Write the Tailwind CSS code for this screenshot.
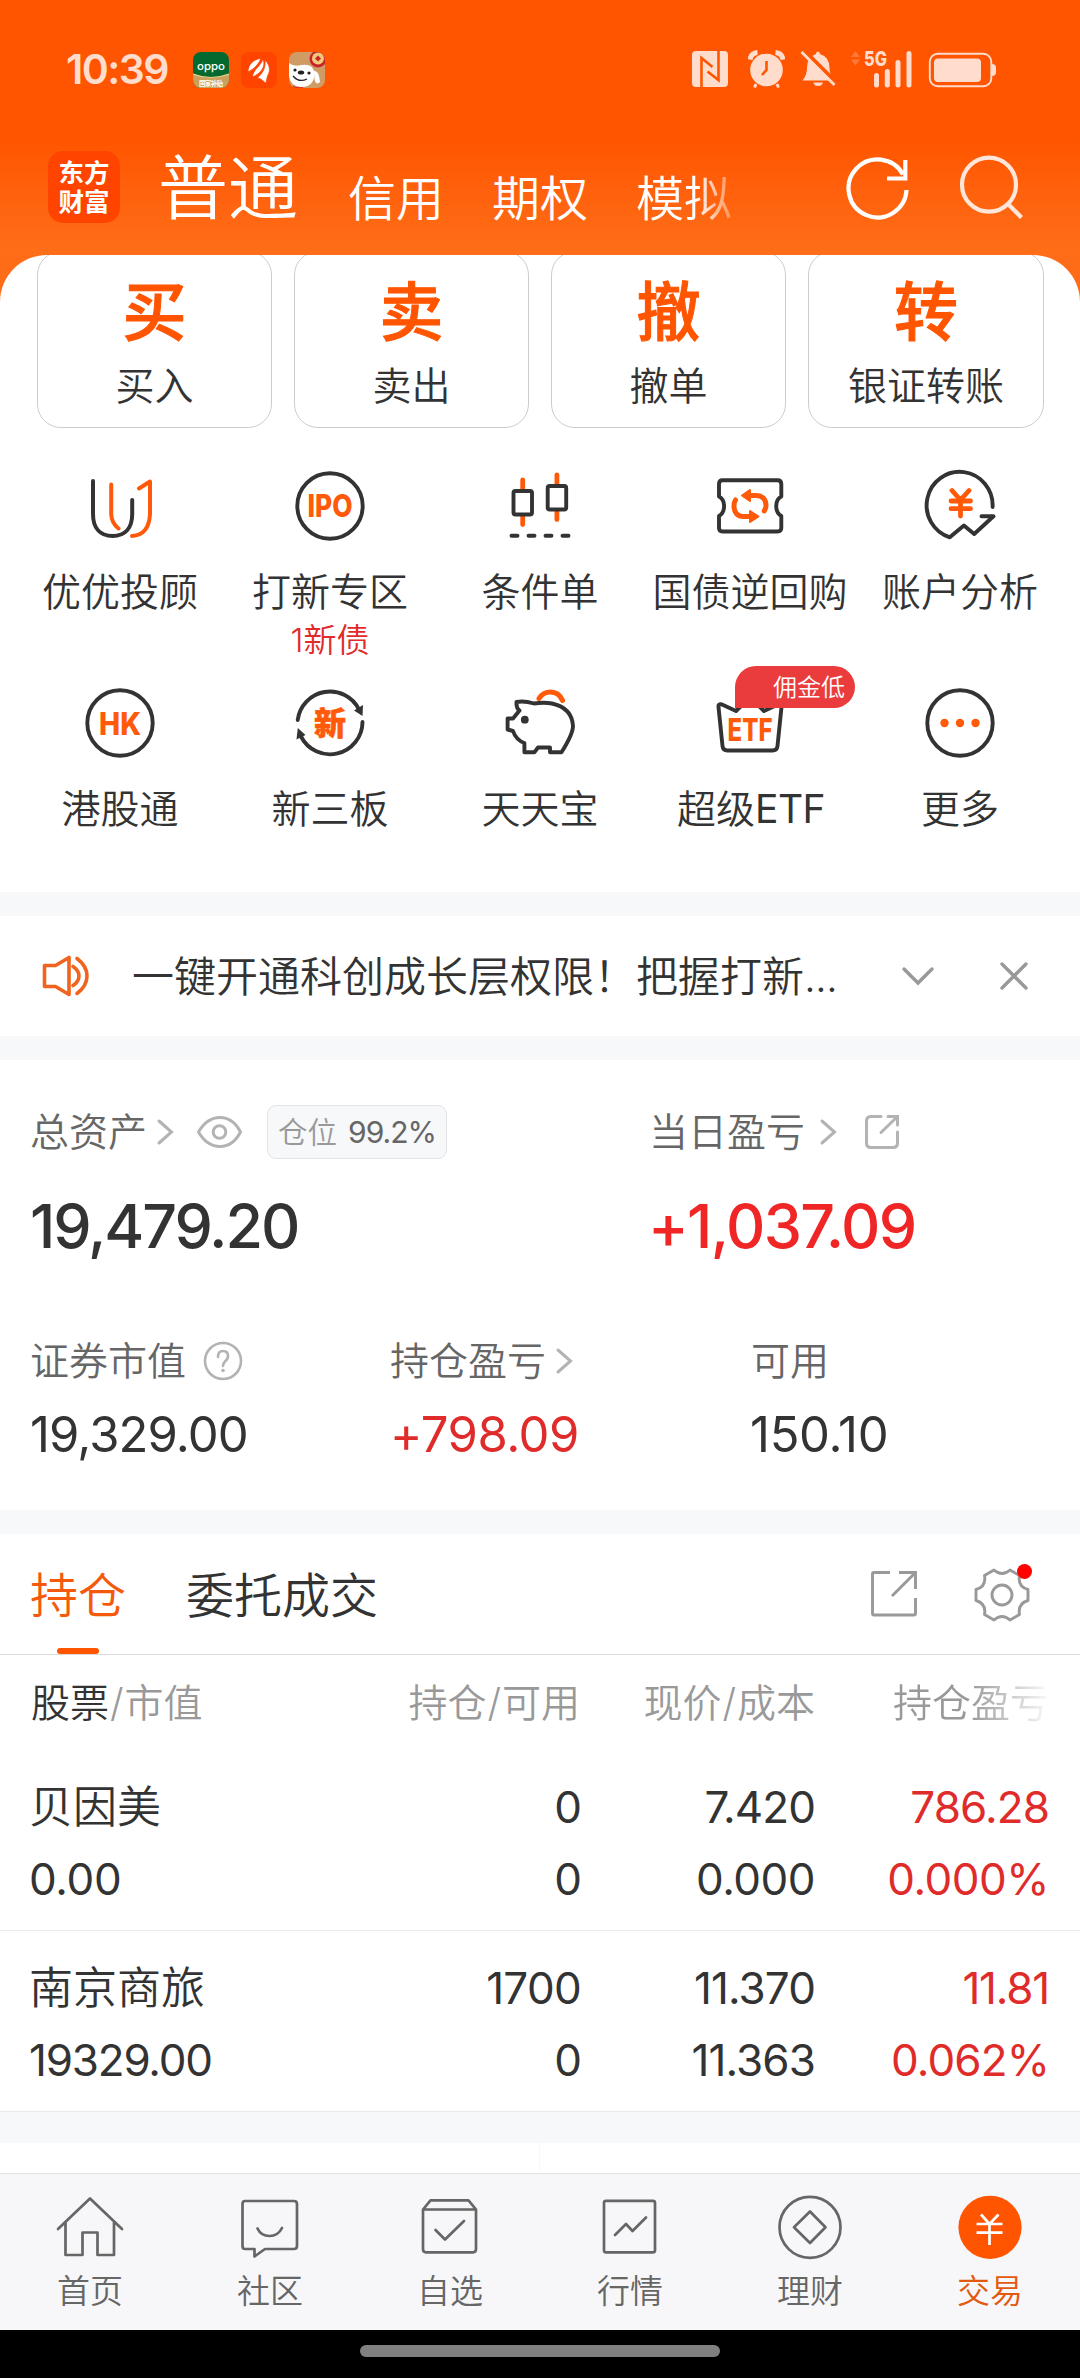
<!DOCTYPE html>
<html lang="zh-CN">
<head>
<meta charset="utf-8">
<title>交易</title>
<script src="https://cdn.jsdelivr.net/npm/@tailwindcss/browser@4"></script>
</head>
<body class="bg-white font-['Inter','Noto_Sans_CJK_SC',sans-serif] text-[#333] font-[350]">
<div class="w-[1080px] h-[2378px] overflow-hidden flex flex-col">

  <!-- Header -->
  <header class="h-[255px] shrink-0 bg-linear-to-b from-[#ff5500] from-55% to-[#ff6e18] flex flex-col text-white">
    <div class="h-[138px] shrink-0 flex items-center pl-[66px] pr-[84px]">
      <span class="text-[41px] leading-[48px] font-semibold text-[#ffdccb] tracking-[-1.6px] w-[127px] whitespace-nowrap">10:39</span>
      <div class="flex gap-[12px] mt-[2px]">
        <svg class="size-9 rounded-[8px]" viewBox="0 0 36 36"><rect width="36" height="36" fill="#04692f"/><path d="M0 22Q18 29 36 22V36H0Z" fill="#c9a15c"/><path d="M0 22Q18 29 36 22" fill="none" stroke="#e8d08a" stroke-width="1.2"/><text x="4" y="18" font-size="11" font-weight="500" fill="#fff" textLength="28" lengthAdjust="spacingAndGlyphs">oppo</text><text x="6" y="33.500" font-size="6.500" font-weight="700" fill="#fff" textLength="24">国家补贴</text></svg>
        <svg class="size-9 rounded-[8px]" viewBox="0 0 36 36"><rect width="36" height="36" fill="#ff4400"/><path d="M7 20C7 12 13 7 20 6.500C17 13 13 17 7 20ZM11.500 25C11.500 18 20 14 22 7C25.500 15 19 22 11.500 25ZM16.500 26C20 22 25 18 24 8C30 14 29 20 26.500 24L25 31C22.500 30 21.500 27 16.500 26Z" fill="#fff" stroke="#ff4400" stroke-width=".8"/></svg>
        <svg class="size-9 rounded-[8px]" viewBox="0 0 36 36"><rect width="36" height="36" fill="#cf9c66"/><circle cx="29" cy="7" r="8.500" fill="#c6242a"/><circle cx="29" cy="6.500" r="6" fill="#f2c879"/><path d="M29 3.500L32 6.500L29 9.500L26 6.500Z" fill="#c6242a"/><path d="M0 11Q5 15 12 13Q25 11 25.500 22Q25 35 12 35Q1 34 0 24Z" fill="#fff"/><path d="M25 19Q30 18 31 30Q27 34 25.500 27Z" fill="#fff"/><circle cx="6" cy="18" r="1.600" fill="#222"/><circle cx="20" cy="21" r="1.600" fill="#222"/><ellipse cx="12" cy="20.500" rx="3.200" ry="2" fill="#222"/><path d="M4 24Q10 31 18 27" fill="none" stroke="#222" stroke-width="1.300"/><path d="M4 34Q9 36 14 35V36H4Z" fill="#d22"/></svg>
      </div>
      <div class="ml-auto flex items-center text-[#ffdccb]">
        <svg class="w-9 h-[38px]" viewBox="692 50 36 38"><rect x="692" y="51" width="36" height="36" rx="4" fill="currentColor"/><path d="M701.500 87V58L712.500 67M718.500 51V80L707.500 71.500" fill="none" stroke="#ff5500" stroke-width="2.600"/></svg>
        <svg class="w-[37px] h-[38px] ml-5" viewBox="748 50 37 38"><circle cx="766.500" cy="70" r="16.300" fill="currentColor"/><path d="M750 59.500Q751 53 757.500 52.500M783 59.500Q782 53 775.500 52.500" stroke="currentColor" stroke-width="5" fill="none"/><path d="M756 84L754.500 87.500M777 84L778.500 87.500" stroke="currentColor" stroke-width="3"/><path d="M766.500 61V70L762 75" stroke="#ff5500" stroke-width="2.600" fill="none"/></svg>
        <svg class="w-9 h-[38px] ml-[15px]" viewBox="800 50 36 38"><path d="M818 51.500Q820 51.500 820 54Q829.500 57 829.500 68Q829.500 75 834 80.500H802.500Q807 75 807 68Q807 57 816 54Q816 51.500 818 51.500ZM813.500 82.500H823Q822 86 818 86T813.500 82.500Z" fill="currentColor"/><path d="M803 50L837 84" stroke="#ff5500" stroke-width="5"/><path d="M801.500 52L834.500 85" stroke="currentColor" stroke-width="2.800"/></svg>
        <svg class="w-[62px] h-[38px] ml-[14px] overflow-visible" viewBox="850 50 62 38"><path d="M851 57L855.500 51L860 57ZM851 59.500H860L855.500 65.500Z" fill="#ff7a3a"/><text x="864" y="66" font-size="20.500" font-weight="800" fill="currentColor" textLength="23" lengthAdjust="spacingAndGlyphs">5G</text><path d="M876.500 75.500V85M887.300 71.500V85M898 62.500V85M909 53.500V85" stroke="currentColor" stroke-width="5" stroke-linecap="round"/></svg>
        <svg class="w-[68px] h-[38px] ml-4" viewBox="928 50 68 38"><rect x="929.800" y="53.800" width="61.500" height="32.400" rx="8" fill="none" stroke="currentColor" stroke-width="1.900"/><rect x="934" y="58.500" width="47" height="23.500" rx="4" fill="currentColor"/><path d="M992 64Q996 64 996 68V72Q996 76 992 76Z" fill="currentColor"/></svg>
      </div>
    </div>
    <div class="flex flex-1 pl-[48px] pt-[2px]">
      <div class="size-[72px] mt-[11px] rounded-[15px] bg-[#ff4400] flex flex-col items-center justify-center font-bold text-[25.500px] leading-[29px]"><span>东方</span><span>财富</span></div>
      <nav class="flex items-start ml-[38px] whitespace-nowrap">
        <span class="text-[70px] leading-[80px] mt-[9px] w-[190px]">普通</span>
        <span class="text-[48px] leading-[60px] mt-[29px] w-[144px]">信用</span>
        <span class="text-[48px] leading-[60px] mt-[29px] w-[144px]">期权</span>
        <span class="text-[48px] leading-[60px] mt-[29px] w-[96px] [mask-image:linear-gradient(to_right,#000_62%,transparent_115%)]">模拟</span>
      </nav>
      <svg class="w-[68px] h-[68px] mt-[15px] ml-[112px]" viewBox="842 154 68 68" fill="none" stroke="#fff" stroke-width="4.200"><path d="M904.500 189A29 29 0 1 1 901 173.500"/><path d="M903.300 159V177.500H885"/></svg>
      <svg class="w-[68px] h-[68px] mt-[15px] ml-[45px]" viewBox="955 154 68 68" fill="none" stroke="#ffe6da" stroke-width="4.200"><circle cx="987" cy="183.700" r="27"/><path d="M1006 203L1019.500 216.500"/></svg>
    </div>
  </header>

  <!-- Shortcuts -->
  <section class="bg-[#ff6c17] h-[637px] shrink-0">
    <div class="bg-white rounded-t-[47px] h-full overflow-hidden">
      <div class="flex gap-[22px] pl-[37px] -mt-1">
        <div class="w-[235px] h-[177px] border border-[#ccc] rounded-[24px] flex flex-col items-center"><span class="text-[64px] leading-[80px] mt-5 font-medium text-[#ff5500] [-webkit-text-stroke:1px_#ff5500]">买</span><span class="text-[39px] leading-[50px] mt-[9px]">买入</span></div>
        <div class="w-[235px] h-[177px] border border-[#ccc] rounded-[24px] flex flex-col items-center"><span class="text-[64px] leading-[80px] mt-5 font-medium text-[#ff5500] [-webkit-text-stroke:1px_#ff5500]">卖</span><span class="text-[39px] leading-[50px] mt-[9px]">卖出</span></div>
        <div class="w-[235px] h-[177px] border border-[#ccc] rounded-[24px] flex flex-col items-center"><span class="text-[64px] leading-[80px] mt-5 font-medium text-[#ff5500] [-webkit-text-stroke:1px_#ff5500]">撤</span><span class="text-[39px] leading-[50px] mt-[9px]">撤单</span></div>
        <div class="w-[236px] h-[177px] border border-[#ccc] rounded-[24px] flex flex-col items-center"><span class="text-[64px] leading-[80px] mt-5 font-medium text-[#ff5500] [-webkit-text-stroke:1px_#ff5500]">转</span><span class="text-[39px] leading-[50px] mt-[9px]">银证转账</span></div>
      </div>
      <div class="grid grid-cols-5 grid-rows-[217px_200px] px-[15px] mt-[38px] text-[39px] leading-[50px] whitespace-nowrap">
        <div class="flex flex-col items-center">
          <svg class="size-20" viewBox="0 0 80 80" fill="none" stroke-width="4" stroke-linecap="round" stroke-linejoin="round"><path d="M31.200 18.500V48Q31.500 57 38.500 62.500M59 22.500L70 15.500V48Q69 69 52 70" stroke="#ff5a0a"/><path d="M13 15V48C13 62 20 70 32.600 70S52.200 62 52.200 48V34" stroke="#333"/></svg>
          <span class="mt-[21px]">优优投顾</span>
        </div>
        <div class="flex flex-col items-center">
          <svg class="size-20" viewBox="0 0 80 80"><circle cx="40" cy="40" r="32.700" fill="none" stroke="#333" stroke-width="3.900"/><text x="17.500" y="51" font-size="31" font-weight="800" fill="#ff5a0a" textLength="45" lengthAdjust="spacingAndGlyphs">IPO</text></svg>
          <span class="mt-[21px]">打新专区</span>
          <span class="text-[33px] leading-[36px] mt-[5px] text-[#e02b2b]">1新债</span>
        </div>
        <div class="flex flex-col items-center">
          <svg class="size-20" viewBox="0 0 80 80" fill="none" stroke-linecap="round"><path d="M22.700 14V24M22.700 48V58.500M56.900 9V19M56.900 43V53.500" stroke="#ff5a0a" stroke-width="4.800"/><g stroke="#333" stroke-width="3.900"><rect x="13.500" y="25" width="18.500" height="23.500" rx="2" fill="#fff"/><rect x="47.700" y="20" width="18.500" height="23.500" rx="2" fill="#fff"/><path d="M11.500 69.700H17.500M28.500 69.700H34.500M45.500 69.700H51.500M62.500 69.700H68.500"/></g></svg>
          <span class="mt-[21px]">条件单</span>
        </div>
        <div class="flex flex-col items-center">
          <svg class="size-20" viewBox="0 0 80 80" fill="none" stroke-linejoin="round" stroke-linecap="round"><path d="M12.500 14.300H67.500Q71.300 14.300 71.300 18V30.500C64.500 34 64.500 46 71.300 50V62Q71.300 65.500 67.500 65.500H12.500Q9 65.500 9 62V50C15.800 46 15.800 34 9 30.500V18Q9 14.300 12.500 14.300Z" stroke="#333" stroke-width="3.900"/><path d="M39 29.500H46C53 29.500 56 34 56 39.500C56 42 55 43.500 54.200 45M25.500 34C24 36 24 38 24 40C24 46 27 50.500 34 50.500H41" stroke="#ff5a0a" stroke-width="5"/><path d="M32 29.500L40 24V35ZM48.500 50.500L40 45V56Z" fill="#ff5a0a" stroke="#ff5a0a" stroke-width="2"/></svg>
          <span class="mt-[21px]">国债逆回购</span>
        </div>
        <div class="flex flex-col items-center">
          <svg class="size-20" viewBox="0 0 80 80" fill="none" stroke-linecap="round"><path d="M72.600 41A33 33.500 0 1 0 29.800 71.300L43.900 59.500L54.200 68L73.500 50.300H61.500" stroke="#333" stroke-width="3.900" stroke-linejoin="round"/><path d="M32 24.500L40.500 34L49 24.500M40.500 34V50M31 35H50.500M31 42.700H50.500" stroke="#ff5a0a" stroke-width="4.800"/></svg>
          <span class="mt-[21px]">账户分析</span>
        </div>
        <div class="flex flex-col items-center">
          <svg class="size-20" viewBox="0 0 80 80"><circle cx="40" cy="40" r="32.700" fill="none" stroke="#333" stroke-width="3.900"/><text x="19" y="51.500" font-size="31" font-weight="800" fill="#ff5a0a" textLength="42" lengthAdjust="spacingAndGlyphs">HK</text></svg>
          <span class="mt-[21px]">港股通</span>
        </div>
        <div class="flex flex-col items-center">
          <svg class="size-20" viewBox="0 0 80 80"><path d="M7.700 37A32.500 32.500 0 0 1 69 26.500M72.500 39A32.500 32.500 0 0 1 11 53.500" fill="none" stroke="#333" stroke-width="3.900" stroke-linecap="round"/><path d="M64 27.500L73 22L72.500 33ZM6.500 56.500L7.800 45L15.500 52Z" fill="#333"/><text x="24" y="51.500" font-size="32" font-weight="900" fill="#ff5a0a" stroke="#ff5a0a" stroke-width=".6">新</text></svg>
          <span class="mt-[21px]">新三板</span>
        </div>
        <div class="flex flex-col items-center">
          <svg class="size-20" viewBox="0 0 80 80" fill="none" stroke-linejoin="round" stroke-linecap="round"><path d="M39 15.500Q43 9 50.500 9Q59 9 62.500 17.500" stroke="#ff5a0a" stroke-width="5"/><path d="M16.500 19Q24 17.500 34 20.500Q44 19 52 20.500Q72 25 73 43Q73 51 61.500 69.300H50V64.500H38L34.400 69.300H24.400V60Q16 57 13 48L7.600 46.500V35.500H13L19.500 27.500Q16 25 16.500 19Z" stroke="#333" stroke-width="3.900"/><circle cx="24.800" cy="36.700" r="3.900" fill="#333"/></svg>
          <span class="mt-[21px]">天天宝</span>
        </div>
        <div class="flex flex-col items-center relative">
          <svg class="size-20" viewBox="0 0 80 80"><path d="M8.500 24Q8 20.500 12 21.500L26 28L40 14L54 28L68 21.500Q72 20.500 71.500 24L67.500 63Q67 67.500 62.500 67.500H17.500Q13 67.500 12.500 63Z" fill="none" stroke="#333" stroke-width="3.900" stroke-linejoin="round"/><text x="17.500" y="57.800" font-size="31" font-weight="800" fill="#ff5a0a" textLength="45" lengthAdjust="spacingAndGlyphs">ETF</text></svg>
          <span class="mt-[21px] pl-[2px]">超级<span class="font-normal tracking-[-0.600px]">ETF</span></span>
          <span class="absolute left-[90px] -top-[17px] w-[120px] h-[42px] rounded-[21px] rounded-bl-none bg-[#ea3c3c] text-white text-[24px] leading-[43px] text-right pr-[10px]">佣金低</span>
        </div>
        <div class="flex flex-col items-center">
          <svg class="size-20" viewBox="0 0 80 80"><circle cx="40" cy="40" r="32.700" fill="none" stroke="#333" stroke-width="3.900"/><g fill="#ff5a0a"><circle cx="24.500" cy="40" r="4.200"/><circle cx="40" cy="40" r="4.200"/><circle cx="55.500" cy="40" r="4.200"/></g></svg>
          <span class="mt-[21px]">更多</span>
        </div>
      </div>
    </div>
  </section>

  <!-- Notice -->
  <section class="h-[168px] shrink-0 border-y-[24px] border-[#f7f8fa] flex items-center pl-[42px] pr-[51px]">
    <svg class="w-[50px] h-[46px]" viewBox="42 953 50 46" fill="none" stroke="#f0641e" stroke-width="3.600" stroke-linejoin="round" stroke-linecap="round"><path d="M44.500 965.500H55.500L69 957.500V994.500L55.500 986.500H44.500Z"/><path d="M73 966.500Q79 970.500 79 976T73 985.500M77 958.500Q87 966 87 976T77 993.500"/></svg>
    <span class="ml-[40px] w-[760px] text-[42px] leading-[60px] pt-[2px] whitespace-nowrap">一键开通科创成长层权限！把握打新<span class="tracking-[-0.800px]">...</span></span>
    <svg class="w-[34px] h-[22px] ml-[9px]" viewBox="0 0 34 22" fill="none" stroke="#999" stroke-width="3.400" stroke-linecap="round"><path d="M3 4L17 18L31 4"/></svg>
    <svg class="size-[30px] ml-auto" viewBox="0 0 30 30" fill="none" stroke="#999" stroke-width="3.400" stroke-linecap="round"><path d="M3 3L27 27M27 3L3 27"/></svg>
  </section>

  <!-- Assets -->
  <section class="h-[474px] shrink-0 border-b-[24px] border-[#f7f8fa] pl-[30px] pt-[42px] text-[39px] text-[#666] whitespace-nowrap">
    <div class="grid grid-cols-[619px_1fr]">
      <div>
        <div class="h-[60px] flex items-center">
          <span>总资产</span>
          <svg class="w-[18px] h-[28px] ml-[9px]" viewBox="0 0 18 28" fill="none" stroke="#b3b3b3" stroke-width="3" stroke-linecap="round"><path d="M3 3L15.500 14L3 25"/></svg>
          <svg class="w-[48px] h-[34px] ml-[21px]" viewBox="0 0 48 34" fill="none" stroke="#b3b3b3" stroke-width="3"><path d="M3.500 17Q12 2.500 25 2.500T45.500 17Q38 31.500 25 31.500T3.500 17Z" stroke-linejoin="round"/><circle cx="24.500" cy="17" r="6.300"/></svg>
          <span class="ml-[24px] w-[180px] h-[54px] flex items-center justify-center border border-[#e4e4e6] bg-[#f7f8fa] rounded-[9px] text-[29.500px]"><span class="text-[#999]">仓位</span><span class="ml-[11px] text-[30px] font-normal tracking-[-1px]">99.2%</span></span>
        </div>
        <div class="text-[61px] leading-[70px] mt-[29px] font-medium tracking-[-2.100px] text-[#333]">19,479.20</div>
      </div>
      <div>
        <div class="h-[60px] flex items-center">
          <span>当日盈亏</span>
          <svg class="w-[18px] h-[28px] ml-[14px]" viewBox="0 0 18 28" fill="none" stroke="#b3b3b3" stroke-width="3" stroke-linecap="round"><path d="M3 3L15.500 14L3 25"/></svg>
          <svg class="size-[36px] ml-[27px]" viewBox="0 0 36 36" fill="none" stroke="#b3b3b3" stroke-width="3" stroke-linecap="round"><path d="M17 2.500H7Q2.500 2.500 2.500 7V29Q2.500 33.500 7 33.500H29Q33.500 33.500 33.500 29V18M24 2.500H33.500V11M33 3L17 18.500"/></svg>
        </div>
        <div class="text-[61px] leading-[70px] mt-[29px] font-medium tracking-[-1.650px] text-[#f02525] -ml-px">+1,037.09</div>
      </div>
    </div>
    <div class="grid grid-cols-[360px_361px_1fr] mt-[75px]">
      <div>
        <div class="h-[50px] flex items-center"><span>证券市值</span><svg class="size-[42px] ml-[16px]" viewBox="0 0 42 42"><circle cx="21" cy="21" r="18" fill="none" stroke="#b3b3b3" stroke-width="2.600"/><path d="M16 17Q16 11 21 11T26 16Q26 19 23 21.500Q21 23.500 21 26" fill="none" stroke="#b3b3b3" stroke-width="2.600" stroke-linecap="round"/><circle cx="21" cy="30.500" r="1.800" fill="#b3b3b3"/></svg></div>
        <div class="text-[49px] leading-[60px] mt-[19px] font-normal tracking-[-0.900px] text-[#333]">19,329.00</div>
      </div>
      <div>
        <div class="h-[50px] flex items-center"><span>持仓盈亏</span><svg class="w-[18px] h-[28px] ml-[9px]" viewBox="0 0 18 28" fill="none" stroke="#b3b3b3" stroke-width="3" stroke-linecap="round"><path d="M3 3L15.500 14L3 25"/></svg></div>
        <div class="text-[49px] leading-[60px] mt-[19px] font-normal tracking-[-0.500px] text-[#e02b2b]">+798.09</div>
      </div>
      <div>
        <div class="h-[50px] flex items-center">可用</div>
        <div class="text-[49px] leading-[60px] mt-[19px] font-normal tracking-[-0.300px] text-[#333] -ml-px">150.10</div>
      </div>
    </div>
  </section>

  <!-- Tabs -->
  <section class="h-[121px] shrink-0 border-b border-[#dcdcdc] flex items-start pl-[30px] text-[48px] leading-[60px]">
    <div class="h-[120px] pt-[32px] flex flex-col items-center text-[#f55a0c]"><span>持仓</span><span class="mt-auto w-[42px] h-[6px] rounded-full bg-[#ff5500]"></span></div>
    <span class="ml-[60px] mt-[32px]">委托成交</span>
    <svg class="size-[48px] ml-auto mt-[36px]" viewBox="0 0 48 48" fill="none" stroke="#999" stroke-width="2.900"><path d="M20 2.500H4Q2.500 2.500 2.500 4V43.500Q2.500 45 4 45H44Q45.500 45 45.500 43.500V28M29 2.500H45.500V19M45 3L22 26" /></svg>
    <div class="relative ml-[55px] mr-[49px] mt-[32px] size-[58px]">
      <svg class="size-[58px]" viewBox="-29 -29 58 58" fill="none" stroke="#999" stroke-width="2.900" stroke-linejoin="round"><path d="M-8-25Q0-18 8-25L17.500-19.500Q15.500-8.500 26-5.500V5.500Q15.500 8.500 17.500 19.500L8 25Q0 18-8 25L-17.500 19.500Q-15.500 8.500-26 5.500V-5.500Q-15.500-8.500-17.500-19.500Z"/><circle r="10"/></svg>
      <span class="absolute left-[44px] -top-[2px] size-[15px] rounded-full bg-[#ff0000]"></span>
    </div>
  </section>

  <!-- Holdings -->
  <section class="shrink-0 whitespace-nowrap">
    <div class="h-[95px] pt-[2px] grid grid-cols-[250px_299px_235px_234px] pl-[31px] items-center text-[39px] text-[#999]">
      <span><span class="text-[#333]">股票</span><span class="px-px">/</span>市值</span>
      <span class="text-right">持仓<span class="px-px">/</span>可用</span>
      <span class="text-right">现价<span class="px-px">/</span>成本</span>
      <span class="text-right [mask-image:linear-gradient(to_right,#000_66%,transparent_102%)]">持仓盈亏</span>
    </div>
    <div class="h-[181px] border-b border-[#eaeaea] grid grid-cols-[250px_300px_234px_234px] grid-rows-[72px_72px] pl-[31px] pt-[21px] text-[44px] leading-[72px] font-normal text-right tracking-[-0.900px]">
      <span class="text-left font-[350] tracking-normal -ml-[2px]">贝因美</span><span>0</span><span>7.420</span><span class="text-[#e02b2b]">786.28</span>
      <span class="text-left tracking-[-0.300px] -ml-[2px]">0.00</span><span>0</span><span class="tracking-[-0.500px]">0.000</span><span class="text-[#e02b2b] tracking-[-0.500px]">0.000%</span>
    </div>
    <div class="h-[181px] border-b border-[#eaeaea] grid grid-cols-[250px_300px_234px_234px] grid-rows-[72px_72px] pl-[31px] pt-[21px] text-[44px] leading-[72px] font-normal text-right tracking-[-0.900px]">
      <span class="text-left font-[350] tracking-normal -ml-[2px]">南京商旅</span><span class="tracking-[-0.700px]">1700</span><span>11.370</span><span class="text-[#e02b2b] tracking-[-1.200px]">11.81</span>
      <span class="text-left tracking-[-1.200px] -ml-[2px]">19329.00</span><span>0</span><span>11.363</span><span class="text-[#e02b2b]">0.062%</span>
    </div>
  </section>
  <div class="h-[31px] shrink-0 bg-[#f6f8fa]"></div>
  <div class="h-[30px] shrink-0 flex"><div class="w-[540px] border-r border-[#f7f7f8]"></div></div>

  <!-- Bottom navigation -->
  <nav class="h-[157px] shrink-0 bg-[#f7f7f9] border-t border-[#e0e0e0] grid grid-cols-6 text-[33px] leading-[40px] text-[#666]">
    <div class="flex flex-col items-center pt-[17px]"><svg class="size-[72px]" viewBox="0 0 72 72" fill="none" stroke="#666" stroke-width="2.700" stroke-linecap="round" stroke-linejoin="round"><path d="M4 38L36 7.500L68 38M11.500 31.500V64H28.500V41.500H43.500V64H60V31.500"/></svg><span class="mt-[8px]">首页</span></div>
    <div class="flex flex-col items-center pt-[17px]"><svg class="size-[72px]" viewBox="0 0 72 72" fill="none" stroke="#666" stroke-width="2.700" stroke-linecap="round" stroke-linejoin="round"><path d="M11 10H60Q63 10 63 13V55Q63 58 60 58H31L20.500 65.500V58H11Q8.500 58 8.500 55V13Q8.500 10 11 10Z"/><path d="M23.500 37.500Q27 45 35.500 45T48 37"/></svg><span class="mt-[8px]">社区</span></div>
    <div class="flex flex-col items-center pt-[17px]"><svg class="size-[72px]" viewBox="0 0 72 72" fill="none" stroke="#666" stroke-width="2.700" stroke-linecap="round" stroke-linejoin="round"><path d="M9 18.500H62V58Q62 61.300 59 61.300H12Q9 61.300 9 58ZM9 18.500L16.500 9.300H54.500L62 18.500M21.500 39L31 48.500L50 30"/></svg><span class="mt-[8px]">自选</span></div>
    <div class="flex flex-col items-center pt-[17px]"><svg class="size-[72px]" viewBox="0 0 72 72" fill="none" stroke="#666" stroke-width="2.700" stroke-linecap="round" stroke-linejoin="round"><rect x="10" y="9.800" width="51" height="51.500" rx="2"/><path d="M21 44L32 33L38.500 40L52 26.500"/></svg><span class="mt-[8px]">行情</span></div>
    <div class="flex flex-col items-center pt-[17px]"><svg class="size-[72px]" viewBox="0 0 72 72" fill="none" stroke="#666" stroke-width="2.700" stroke-linejoin="round"><circle cx="36" cy="36.300" r="30.500"/><path d="M36 20.500L51.500 36.300L36 52L20 36.300Z"/></svg><span class="mt-[8px]">理财</span></div>
    <div class="flex flex-col items-center pt-[17px]"><svg class="size-[72px]" viewBox="0 0 72 72" fill="none" stroke="#fff" stroke-width="2.700"><circle cx="36" cy="36.300" r="31.600" fill="#ff5500" stroke="none"/><path d="M27 23.500L35.500 33L44.500 23.500M35.500 33V54M22.500 33H48.500M22.500 41.700H48.500"/></svg><span class="mt-[8px] text-[#e2590f]">交易</span></div>
  </nav>
  <div class="flex-1 bg-black flex justify-center pt-[15px]"><span class="w-[360px] h-[12px] rounded-full bg-[#808080]"></span></div>
</div>
</body>
</html>
